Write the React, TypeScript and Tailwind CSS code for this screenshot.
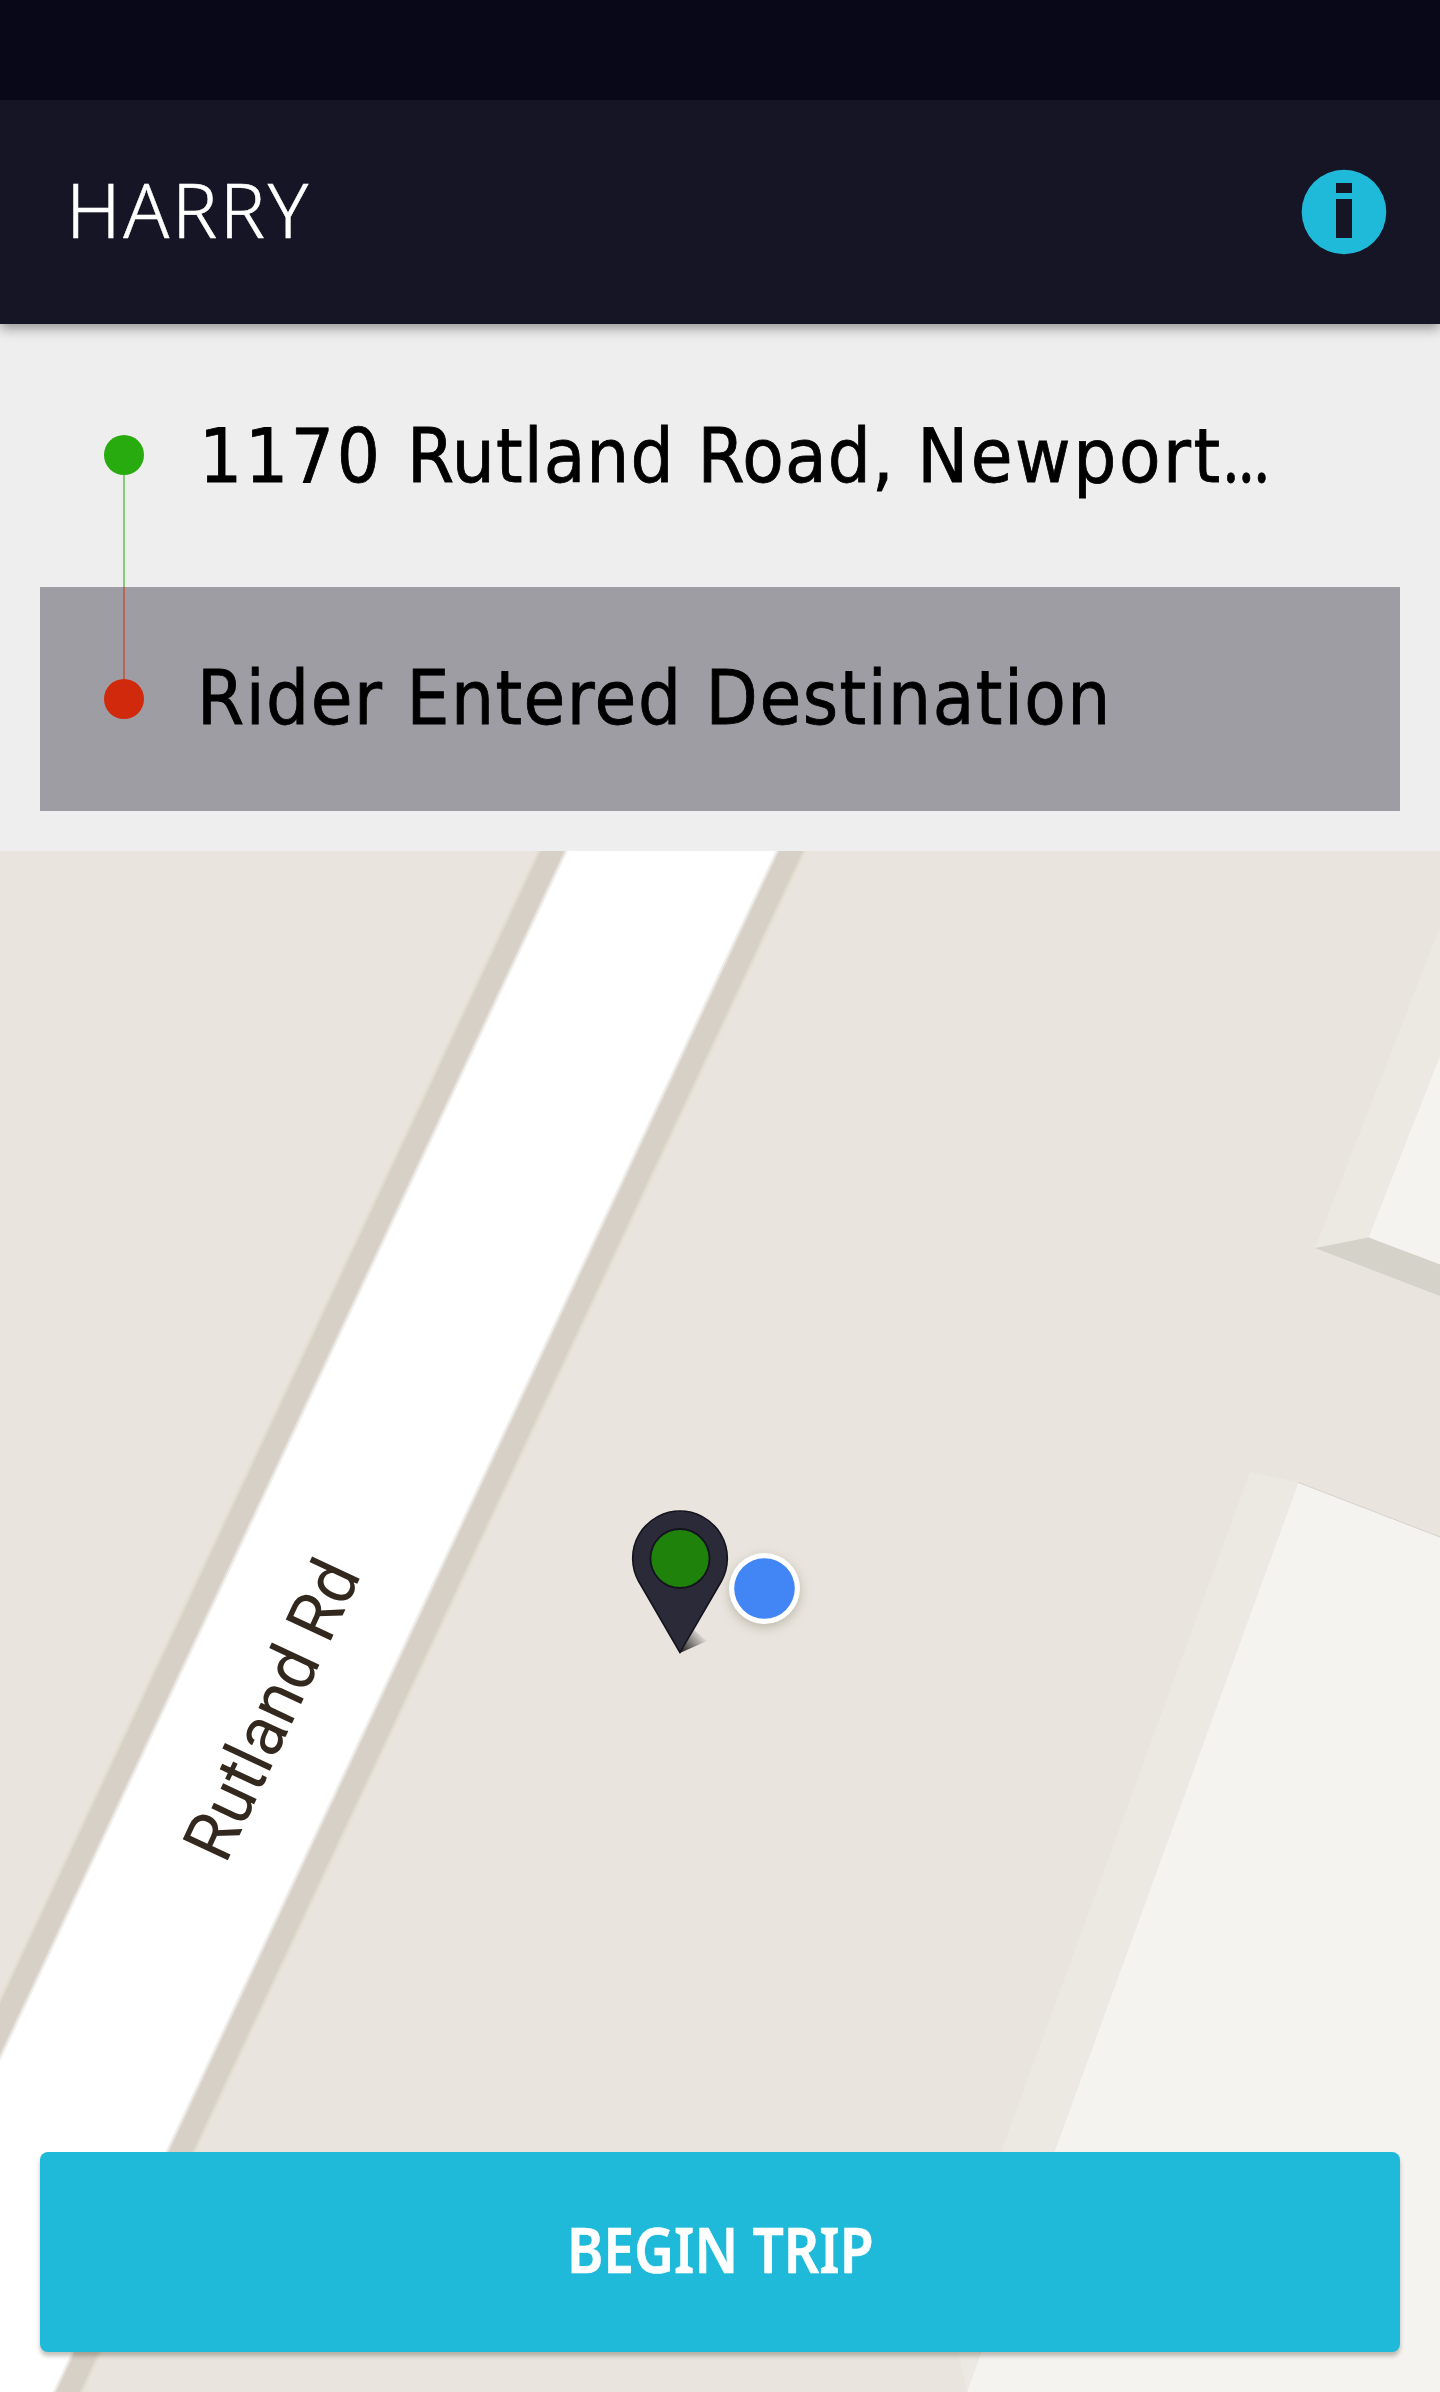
function InfoIcon() {
  return (
    <svg className="size-[86px]" viewBox="0 0 86 86" aria-label="Trip info">
      <circle cx="43" cy="43" r="42.3" fill="#1fbad9" />
      <rect x="35" y="14" width="16" height="10" fill="#161525" />
      <rect x="35" y="30" width="16" height="39" fill="#161525" />
    </svg>
  );
}

function Header() {
  return (
    <header className="relative z-10 flex h-[224px] items-center justify-between bg-[#161525] pr-[53px] pl-[66px] shadow-[0_4px_12px_rgba(0,0,0,0.4)]">
      <h1 className="-mt-1.5 font-['Noto_Sans',sans-serif] text-[75.6px] leading-none font-light tracking-[2.6px] text-white [-webkit-text-stroke:0.5px_white]">
        HARRY
      </h1>
      <InfoIcon />
    </header>
  );
}

function Stops() {
  return (
    <section className="flex h-[527px] flex-col gap-5 bg-[#eeeeee] px-10 pt-[19px] pb-10 font-['DejaVu_Sans_Condensed','DejaVu_Sans',sans-serif] text-[75.5px] leading-none text-black [-webkit-text-stroke:0.8px_black]">
      <div className="relative flex h-[224px] items-center pl-16">
        <span className="size-10 shrink-0 rounded-full bg-[#27ab0f]" />
        <span className="absolute top-[132px] left-[83px] h-[112px] w-[2px] bg-[#86cb7b]" />
        <p className="ml-[55px] whitespace-nowrap">
          <span className="tracking-[2.7px]">1170 </span>
          <span className="tracking-[1.1px]">Rutland Road, </span>
          <span className="tracking-[2.6px]">Newport</span>
          <span className="inline-block origin-left scale-x-[0.78] font-['Noto_Sans',sans-serif]">…</span>
        </p>
      </div>
      <div className="relative flex h-[224px] items-center bg-[#9e9da3] pl-16">
        <span className="absolute top-0 left-[83px] h-[92px] w-[2px] bg-[#b86558]" />
        <span className="size-10 shrink-0 rounded-full bg-[#d1290c]" />
        <p className="ml-[53px] tracking-[1.5px] whitespace-nowrap">Rider Entered Destination</p>
      </div>
    </section>
  );
}

/* Road strokes share one centre line; the wider ones go underneath. */
const roadStrokes = [
  { width: 245, color: "#e6e2d8" },
  { width: 241, color: "#dfdace" },
  { width: 237, color: "#d7d0c6" },
  { width: 195, color: "#e1ddd6" },
  { width: 192, color: "#f1efec" },
  { width: 188, color: "#ffffff" },
];

function MapCanvas() {
  return (
    <svg className="absolute inset-0 h-full w-full" viewBox="0 851 1440 1541">
      <defs>
        <linearGradient id="tipShadow" gradientUnits="userSpaceOnUse" x1="681" y1="1652" x2="703" y2="1634">
          <stop offset="0" stopColor="#000" stopOpacity="0.85" />
          <stop offset="1" stopColor="#000" stopOpacity="0" />
        </linearGradient>
        <filter id="dotShadow" x="-50%" y="-50%" width="200%" height="200%">
          <feGaussianBlur stdDeviation="6" />
        </filter>
      </defs>
      <rect y="851" width="1440" height="1541" fill="#e9e5de" />

      {roadStrokes.map((s) => (
        <line key={s.width} x1="718.5" y1="751" x2="-97.6" y2="2491" stroke={s.color} strokeWidth={s.width} />
      ))}

      <polygon points="1440,927 1315,1248 1368.5,1237.5 1440,1056" fill="#ece9e2" />
      <polygon points="1440,1056 1368.5,1237.5 1440,1264.5" fill="#f4f3ef" />
      <polygon points="1315,1248 1368.5,1237.5 1440,1264.5 1440,1296" fill="#d5d2ca" />

      <polygon points="1250,1472 1298.5,1482.5 967,2391 947,2300" fill="#ece9e2" />
      <polygon points="1298.5,1482.5 1440,1537 1440,2392 967,2392" fill="#f4f3ef" />
      <line x1="1298.5" y1="1482.5" x2="1440" y2="1537" stroke="#d5d2ca" strokeWidth="1" />

      <text
        transform="translate(228 1860) rotate(-64.9) scale(0.95 1)"
        x="-6"
        className="fill-[#33281e] font-['Roboto',sans-serif] text-[70px]"
      >
        Rutland Rd
      </text>

      <polygon points="680,1653 707,1641 694,1630" fill="url(#tipShadow)" />
      <path
        d="M680 1652.5 L638.5 1581 A47.3 47.3 0 1 1 721.5 1581 Z"
        fill="#2b2a38"
        stroke="#14131f"
        strokeWidth="1.6"
      />
      <circle cx="680" cy="1558.5" r="29.5" fill="#1f820a" stroke="#14131f" strokeWidth="1.8" />

      <circle cx="764.5" cy="1592" r="35" fill="#8a8570" opacity="0.5" filter="url(#dotShadow)" />
      <circle cx="764.5" cy="1588.5" r="35.5" fill="#fff" />
      <circle cx="764.5" cy="1588.5" r="30.3" fill="#4286f5" />
    </svg>
  );
}

export default function App() {
  return (
    <div className="flex h-[2392px] w-[1440px] flex-col overflow-hidden bg-[#eeeeee]">
      <div className="relative z-20 h-[100px] shrink-0 bg-[#080818]" />
      <Header />
      <Stops />
      <main className="relative flex flex-1 flex-col justify-end p-10">
        <MapCanvas />
        <button className="relative flex h-[200px] items-center justify-center rounded-lg bg-[#1fbad9] shadow-[0_4px_4px_rgba(60,50,30,0.3)]">
          <span className="-mt-2 ml-px inline-block scale-x-[0.875] font-['Noto_Sans',sans-serif] text-[63px] leading-none font-semibold whitespace-nowrap text-white [-webkit-text-stroke:0.6px_white]">
            BEGIN TRIP
          </span>
        </button>
      </main>
    </div>
  );
}
